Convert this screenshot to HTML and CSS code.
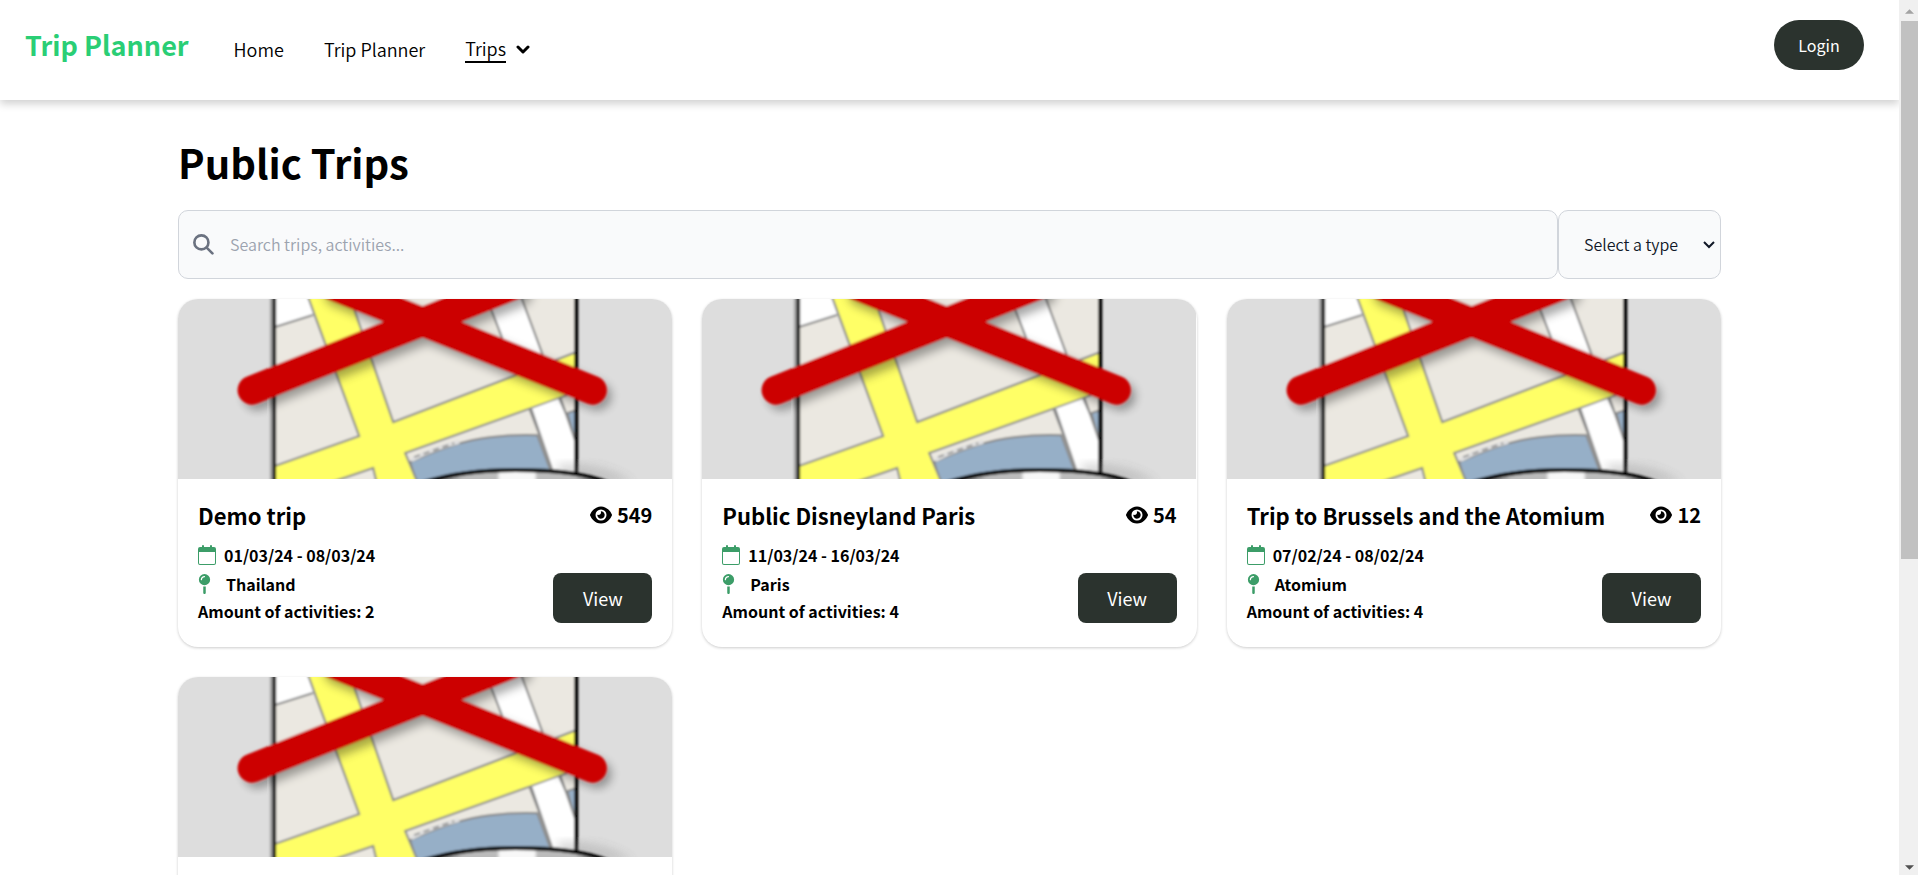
FILE: index.html
```
<!DOCTYPE html>
<html lang="en">
<head>
<meta charset="utf-8">
<title>Trip Planner</title>
<link rel="stylesheet" href="styles.css">
</head>
<body>
<svg class="sprite" aria-hidden="true">
  <defs>
    <filter id="soft" x="-5%" y="-5%" width="110%" height="110%"><feGaussianBlur stdDeviation="1.2"/></filter>
    <filter id="shade" x="-20%" y="-20%" width="140%" height="140%"><feGaussianBlur stdDeviation="5"/></filter>
    <linearGradient id="lens" x1="0" x2="1">
      <stop offset="0" stop-color="#333"/><stop offset="0.22" stop-color="#bbb"/><stop offset="0.4" stop-color="#bbb"/>
      <stop offset="0.42" stop-color="#f8f8f8"/><stop offset="0.6" stop-color="#f8f8f8"/><stop offset="0.62" stop-color="#bbb"/>
      <stop offset="0.82" stop-color="#bbb"/><stop offset="1" stop-color="#333"/>
    </linearGradient>
    <linearGradient id="edge" x1="0" x2="1"><stop offset="0" stop-color="#ddd"/><stop offset="1" stop-color="#444"/></linearGradient>
    <clipPath id="sheet"><path d="M97-10H398V190H97z"/></clipPath>
  </defs>
  <symbol id="map" viewBox="0 0 494 180" preserveAspectRatio="xMidYMid slice">
    <path fill="#ddd" d="M0 0h494v180H0z"/>
    <g filter="url(#soft)">
      <g clip-path="url(#sheet)">
        <path fill="#ebe8e1" d="M97-10h301v200H97z"/>
        <path fill="#fff" d="M97-10h30l8 26-38 12z"/>
        <path fill="none" stroke="#888" stroke-width="2" d="M97 28l38-12"/>
        <path fill="#fff" stroke="#888" stroke-width="2" d="M305-10L386 200h32L340-10z"/>
        <path fill="#96afc7" stroke="#888" stroke-width="2" d="M232 163q45-21 80-25 25-3 47-2l18 48H238zM389 114l12-4v30l-6-4z"/>
        <path fill="#ff6" stroke="#888" stroke-width="2" d="M127-10l54 147-90 32v20h45l59-20 5 21h42l-15-36 179-64V50L215 123 169-10z"/>
        <path fill="#fff" d="M353 110l27-10 18 40v40h-21z"/>
        <path fill="none" stroke="#888" stroke-width="2" d="M353 110l24 70M382 98l15 44"/>
        <path fill="none" stroke="#e0e0e0" stroke-width="4" d="M233 161q25-13 48-18"/>
        <path fill="none" stroke="#999" stroke-width="2" stroke-dasharray="6 4" d="M236 158l40-14"/>
      </g>
      <path fill="url(#edge)" d="M91-10h5v200h-5z"/>
      <path fill="#000" d="M95-10h3v200h-3zM396-10h4v184h-4z"/>
      <path fill="#888" opacity="0.3" filter="url(#shade)" d="M380 164q50 0 75 20h-75z"/>
      <path fill="url(#lens)" stroke="#000" stroke-width="4" d="M243 184q40-13 94-13 65 0 94 13z"/>
      <path fill="none" stroke="#000" stroke-width="28" stroke-linecap="round" opacity="0.35" filter="url(#shade)" d="M79 97L340-6M419 97L160-6"/>
      <path fill="none" stroke="#c00" stroke-width="29" stroke-linecap="round" d="M74 91L334-13M414 91L155-13"/>
    </g>
  </symbol>
  <symbol id="eye" viewBox="0 0 576 512"><path d="M288 32c-80.8 0-145.5 36.8-192.6 80.6C48.6 156 17.3 208 2.5 243.7c-3.3 7.9-3.3 16.7 0 24.6C17.3 304 48.6 356 95.4 399.4C142.5 443.2 207.2 480 288 480s145.5-36.8 192.6-80.6c46.8-43.5 78.1-95.4 93-131.1c3.3-7.9 3.3-16.7 0-24.6c-14.9-35.7-46.2-87.7-93-131.1C433.5 68.8 368.8 32 288 32zM144 256a144 144 0 1 1 288 0 144 144 0 1 1 -288 0zm144-64c0 35.3-28.7 64-64 64c-7.1 0-13.9-1.2-20.3-3.3c-5.5-1.8-11.9 1.6-11.7 7.4c.3 6.9 1.3 13.8 3.2 20.7c13.7 51.2 66.4 81.6 117.6 67.9s81.6-66.4 67.9-117.6c-11.1-41.5-47.8-69.4-88.6-71.1c-5.8-.2-9.2 6.1-7.4 11.7c2.1 6.4 3.3 13.2 3.3 20.3z"/></symbol>
  <symbol id="pin" viewBox="0 0 320 512"><path d="M16 144a144 144 0 1 1 288 0A144 144 0 1 1 16 144zM160 80c8.8 0 16-7.2 16-16s-7.2-16-16-16c-53 0-96 43-96 96c0 8.8 7.2 16 16 16s16-7.2 16-16c0-35.3 28.7-64 64-64zM128 480V317.1c10.4 1.9 21.1 2.9 32 2.9s21.6-1 32-2.9V480c0 17.7-14.3 32-32 32s-32-14.3-32-32z"/></symbol>
  <symbol id="calendar" viewBox="0 0 18 20"><path fill-rule="evenodd" d="M4 1a1 1 0 0 1 2 0v1h6V1a1 1 0 0 1 2 0v1h2a2 2 0 0 1 2 2v14a2 2 0 0 1-2 2H2a2 2 0 0 1-2-2V4a2 2 0 0 1 2-2h2zM1 7v11a1 1 0 0 0 1 1h14a1 1 0 0 0 1-1V7z"/></symbol>
</svg>
<div class="window">
  <div class="page">
    <header class="header">
      <a class="logo" href="#">Trip Planner</a>
      <nav class="nav">
        <a class="nav-link" href="#">Home</a>
        <a class="nav-link" href="#">Trip Planner</a>
        <span class="nav-menu"><a class="nav-link nav-current" href="#">Trips</a><svg class="chevron" viewBox="0 0 14 10" aria-hidden="true"><path d="M2 2l5 5 5-5"/></svg></span>
      </nav>
      <button class="login" type="button">Login</button>
    </header>
    <main class="main">
      <h1 class="heading">Public Trips</h1>
      <form class="filters">
        <label class="search">
          <svg class="search-icon" viewBox="0 0 20 20" aria-hidden="true"><circle cx="8" cy="8" r="6.700"/><path d="M13 13l5.500 5.500"/></svg>
          <input class="search-input" type="search" aria-label="Search trips" placeholder="Search trips, activities...">
        </label>
        <div class="type">
          <select class="type-select" aria-label="Type"><option>Select a type</option></select>
          <svg class="type-chevron" viewBox="0 0 14 10" aria-hidden="true"><path d="M2 2l5 5 5-5"/></svg>
        </div>
      </form>
      <div class="grid">
        <article class="card">
          <svg class="card-map" role="img" aria-label="Map unavailable"><use href="#map"/></svg>
          <div class="card-body">
            <div class="card-top"><h2 class="card-title">Demo trip</h2><span class="views"><svg class="eye"><use href="#eye"/></svg>549</span></div>
            <div class="card-bottom">
              <div class="facts">
                <p class="fact fact-date"><svg class="calendar"><use href="#calendar"/></svg>01/03/24 - 08/03/24</p>
                <p class="fact fact-place"><svg class="pin"><use href="#pin"/></svg>Thailand</p>
                <p class="fact">Amount of activities: 2</p>
              </div>
              <button class="view" type="button">View</button>
            </div>
          </div>
        </article>
        <article class="card">
          <svg class="card-map" role="img" aria-label="Map unavailable"><use href="#map"/></svg>
          <div class="card-body">
            <div class="card-top"><h2 class="card-title">Public Disneyland Paris</h2><span class="views"><svg class="eye"><use href="#eye"/></svg>54</span></div>
            <div class="card-bottom">
              <div class="facts">
                <p class="fact fact-date"><svg class="calendar"><use href="#calendar"/></svg>11/03/24 - 16/03/24</p>
                <p class="fact fact-place"><svg class="pin"><use href="#pin"/></svg>Paris</p>
                <p class="fact">Amount of activities: 4</p>
              </div>
              <button class="view" type="button">View</button>
            </div>
          </div>
        </article>
        <article class="card">
          <svg class="card-map" role="img" aria-label="Map unavailable"><use href="#map"/></svg>
          <div class="card-body">
            <div class="card-top"><h2 class="card-title">Trip to Brussels and the Atomium</h2><span class="views"><svg class="eye"><use href="#eye"/></svg>12</span></div>
            <div class="card-bottom">
              <div class="facts">
                <p class="fact fact-date"><svg class="calendar"><use href="#calendar"/></svg>07/02/24 - 08/02/24</p>
                <p class="fact fact-place"><svg class="pin"><use href="#pin"/></svg>Atomium</p>
                <p class="fact">Amount of activities: 4</p>
              </div>
              <button class="view" type="button">View</button>
            </div>
          </div>
        </article>
        <article class="card">
          <svg class="card-map" role="img" aria-label="Map unavailable"><use href="#map"/></svg>
          <div class="card-body"></div>
        </article>
      </div>
    </main>
  </div>
  <div class="scrollbar" aria-hidden="true">
    <svg class="arrow arrow-up" viewBox="0 0 10 5"><path d="M5 0l5 5H0z"/></svg>
    <div class="track"><div class="thumb"></div></div>
    <svg class="arrow" viewBox="0 0 10 5"><path d="M0 0h10L5 5z"/></svg>
  </div>
</div>
</body>
</html>
```
FILE: styles.css
```
* { box-sizing: border-box; }
body, h1, h2, p { margin: 0; }
body {
  font-family: "Noto Sans CJK JP", "Noto Sans", sans-serif;
  font-size: 16px;
  line-height: 24px;
  color: #000;
  background: #fff;
}
button, input, select { font: inherit; }
button { border: 0; cursor: pointer; }
a { color: inherit; text-decoration: none; }
.sprite { position: absolute; width: 0; height: 0; }

.window { display: flex; height: 100vh; overflow: hidden; }
.page { flex: 1; min-width: 0; overflow: hidden; }

.header {
  display: flex;
  align-items: flex-start;
  height: 100px;
  padding: 20px 35px 0 25px;
  box-shadow: 0 4px 8px rgba(0, 0, 0, 0.18);
}
.logo { font-size: 27px; line-height: 50px; font-weight: 700; color: #2ace75; }
.nav { display: flex; gap: 40px; margin-left: 45px; padding-top: 15px; font-size: 18px; line-height: 28px; font-weight: 350; }
.nav-menu { display: flex; align-items: flex-start; gap: 10px; }
.nav-current { line-height: 26px; border-bottom: 2px solid #000; }
.chevron { width: 14px; height: 10px; margin-top: 10px; }
.chevron path, .type-chevron path { fill: none; stroke: #000; stroke-width: 3; stroke-linecap: round; stroke-linejoin: round; }
.login {
  margin-left: auto;
  width: 90px;
  height: 50px;
  border-radius: 25px;
  font-weight: 400;
  color: #fff;
  background: #2b332e;
}

.main { padding: 34px 178px 0; }
.heading { font-size: 40px; line-height: 56px; font-weight: 700; }
.filters { display: flex; margin: 20px 0 20px; }
.search {
  flex: 1;
  display: flex;
  align-items: center;
  gap: 16px;
  padding: 0 14px;
  border: 1px solid #d1d5db;
  border-radius: 10px;
  background: #f9fafb;
}
.search-icon { width: 21px; height: 21px; fill: none; stroke: #6b7280; stroke-width: 2.500; stroke-linecap: round; }
.search-input { flex: 1; min-width: 0; height: 67px; padding: 0 0 2px; border: 0; outline: 0; background: transparent; font-weight: 350; }
.search-input::placeholder { color: #9ca3af; }
.type { position: relative; display: flex; }
.type-select {
  appearance: none;
  width: 163px;
  padding: 0 25px 2px;
  border: 1px solid #d1d5db;
  border-radius: 10px;
  font-weight: 350;
  color: #111827;
  background: #f9fafb;
}
.type-chevron { position: absolute; right: 5px; top: 30px; width: 14px; height: 10px; pointer-events: none; }
.type-chevron path { stroke: #111827; stroke-width: 2; stroke-linecap: butt; stroke-linejoin: miter; }

.grid { display: grid; grid-template-columns: repeat(3, 1fr); gap: 30px; }
.card { border-radius: 20px; overflow: hidden; background: #fff; box-shadow: 0 1px 3px rgba(0, 0, 0, 0.2); }
.card-map { display: block; width: 100%; height: 180px; }
.card-body { min-height: 168px; padding: 20px; }
.card-top { display: flex; justify-content: space-between; align-items: center; line-height: 32px; }
.card-title { font-size: 22px; font-weight: 700; }
.views { display: flex; align-items: center; gap: 5px; font-size: 20px; font-weight: 700; }
.eye { width: 22px; height: 20px; }
.card-bottom { display: flex; justify-content: space-between; align-items: flex-end; padding-top: 10px; }
.facts { font-weight: 700; }
.fact { display: flex; align-items: center; line-height: 24px; }
.fact-date { gap: 8px; line-height: 28px; }
.fact-place { gap: 15px; line-height: 30px; }
.calendar { width: 18px; height: 20px; fill: #3c9d68; }
.pin { width: 13px; height: 20px; fill: #3c9d68; }
.view { width: 99px; height: 50px; border-radius: 8px; font-size: 18px; font-weight: 400; color: #fff; background: #2b332e; }

.scrollbar { display: flex; flex-direction: column; align-items: center; width: 19px; padding: 9px 0 5px 2px; background: #f0f0f0; }
.arrow { width: 9px; height: 5px; fill: #505050; }
.arrow-up { fill: #a3a3a3; }
.track { display: grid; grid-template-rows: 9fr 5fr; flex: 1; width: 100%; padding: 7px 0; }
.thumb { background: #c1c1c1; }
```
